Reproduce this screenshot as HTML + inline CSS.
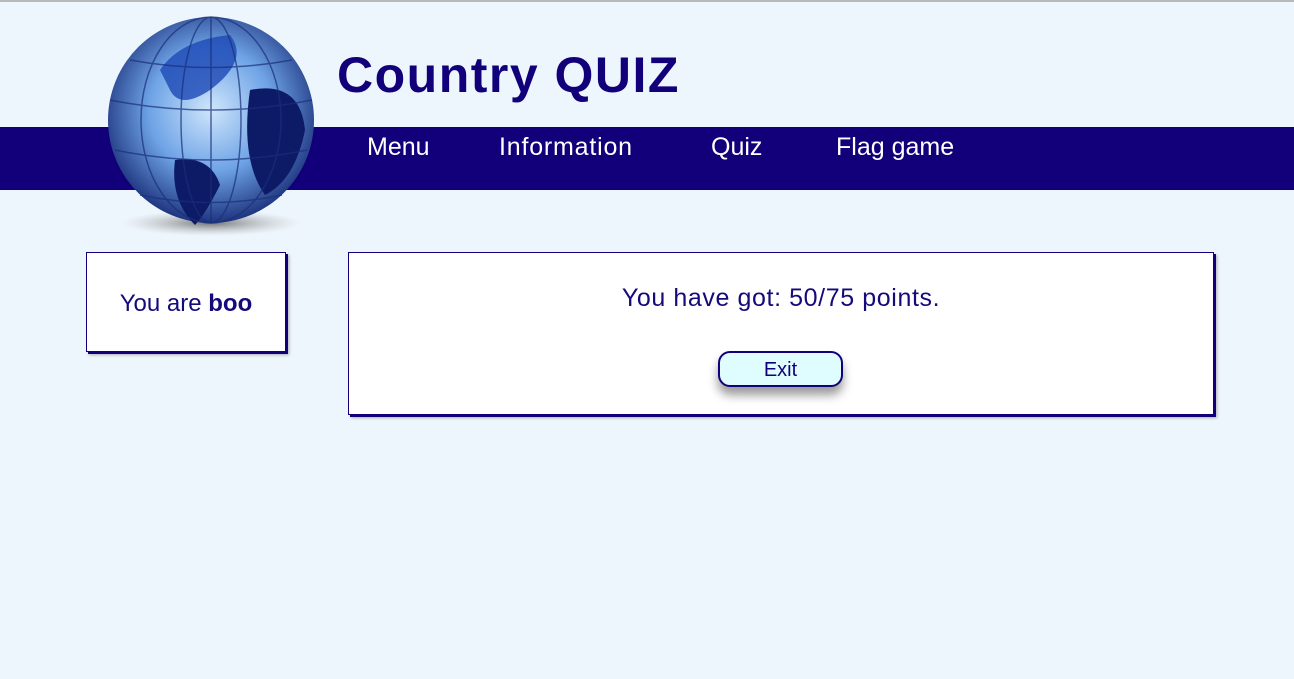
<!DOCTYPE html>
<html><head><style>
body{margin:0;width:1294px;height:679px;background:#eef6fd;font-family:"Comic Sans MS","Liberation Sans",sans-serif;position:relative;overflow:hidden;color:#140a7a}
.top{position:absolute;left:0;top:0;width:1294px;height:2px;background:#b8b8b8}
.nav{position:absolute;left:0;top:127px;width:1294px;height:63px;background:#12007b}
.nav span{position:absolute;top:6px;color:#fff;font-size:25px}
h1{position:absolute;left:337px;top:46px;margin:0;font-size:50px;font-weight:bold;color:#12007b;letter-spacing:1.5px}
.box{position:absolute;background:#fff;border:1px solid #12007b;box-shadow:2px 2px 0 #12007b,3px 3px 3px rgba(0,0,0,.3)}
.btn{position:absolute;left:718px;top:351px;width:121px;height:32px;border:2px solid #12007b;border-radius:12px;background:#dffdfe;box-shadow:0 8px 10px rgba(0,0,0,.4);font-family:"Liberation Sans",sans-serif;font-size:20px;text-align:center;line-height:34px;color:#12007b}
</style></head><body>
<div class="top"></div>
<div class="nav"><span style="left:367px">Menu</span><span style="left:499px;letter-spacing:.8px">Information</span><span style="left:711px">Quiz</span><span style="left:836px">Flag game</span></div>
<svg style="position:absolute;left:100px;top:10px" width="230" height="235">
<defs><radialGradient id="g" cx="0.5" cy="0.45" r="0.6"><stop offset="0" stop-color="#cfe6fb"/><stop offset="0.5" stop-color="#6ea3e6"/><stop offset="1" stop-color="#0e1e6a"/></radialGradient>
<radialGradient id="s" cx="0.5" cy="0.5" r="0.5"><stop offset="0" stop-color="#555" stop-opacity=".8"/><stop offset="1" stop-color="#aaa" stop-opacity="0"/></radialGradient></defs>
<ellipse cx="111" cy="213" rx="90" ry="13" fill="url(#s)"/>
<circle cx="111" cy="110" r="103" fill="url(#g)"/>
<path d="M60 60 Q80 30 130 25 Q150 50 110 80 Q80 100 70 80 Z" fill="#1d48b5" opacity=".8"/>
<path d="M150 80 Q200 70 205 120 Q195 170 165 185 Q140 150 150 80Z" fill="#0d1a66"/>
<path d="M75 150 Q110 145 120 175 Q105 205 95 215 Q70 190 75 150Z" fill="#0d1a66"/>
<g fill="none" stroke="#1a2f7a" stroke-width="1.5" opacity=".7">
<ellipse cx="111" cy="110" rx="30" ry="103"/><ellipse cx="111" cy="110" rx="70" ry="103"/>
<line x1="111" y1="7" x2="111" y2="213"/>
<path d="M10 90 Q111 110 212 90M15 140 Q111 160 207 140M30 50 Q111 65 192 50M40 185 Q111 200 182 185"/></g>
</svg>
<h1>Country QUIZ</h1>
<div class="box" style="left:86px;top:252px;width:198px;height:98px"><div style="text-align:center;margin-top:37px;font-size:24px">You are <b>boo</b></div></div>
<div class="box" style="left:348px;top:252px;width:864px;height:161px"><div style="text-align:center;margin-top:31px;font-size:25px;letter-spacing:.6px">You have got: 50/75 points.</div></div>
<div class="btn">Exit</div>
</body></html>
